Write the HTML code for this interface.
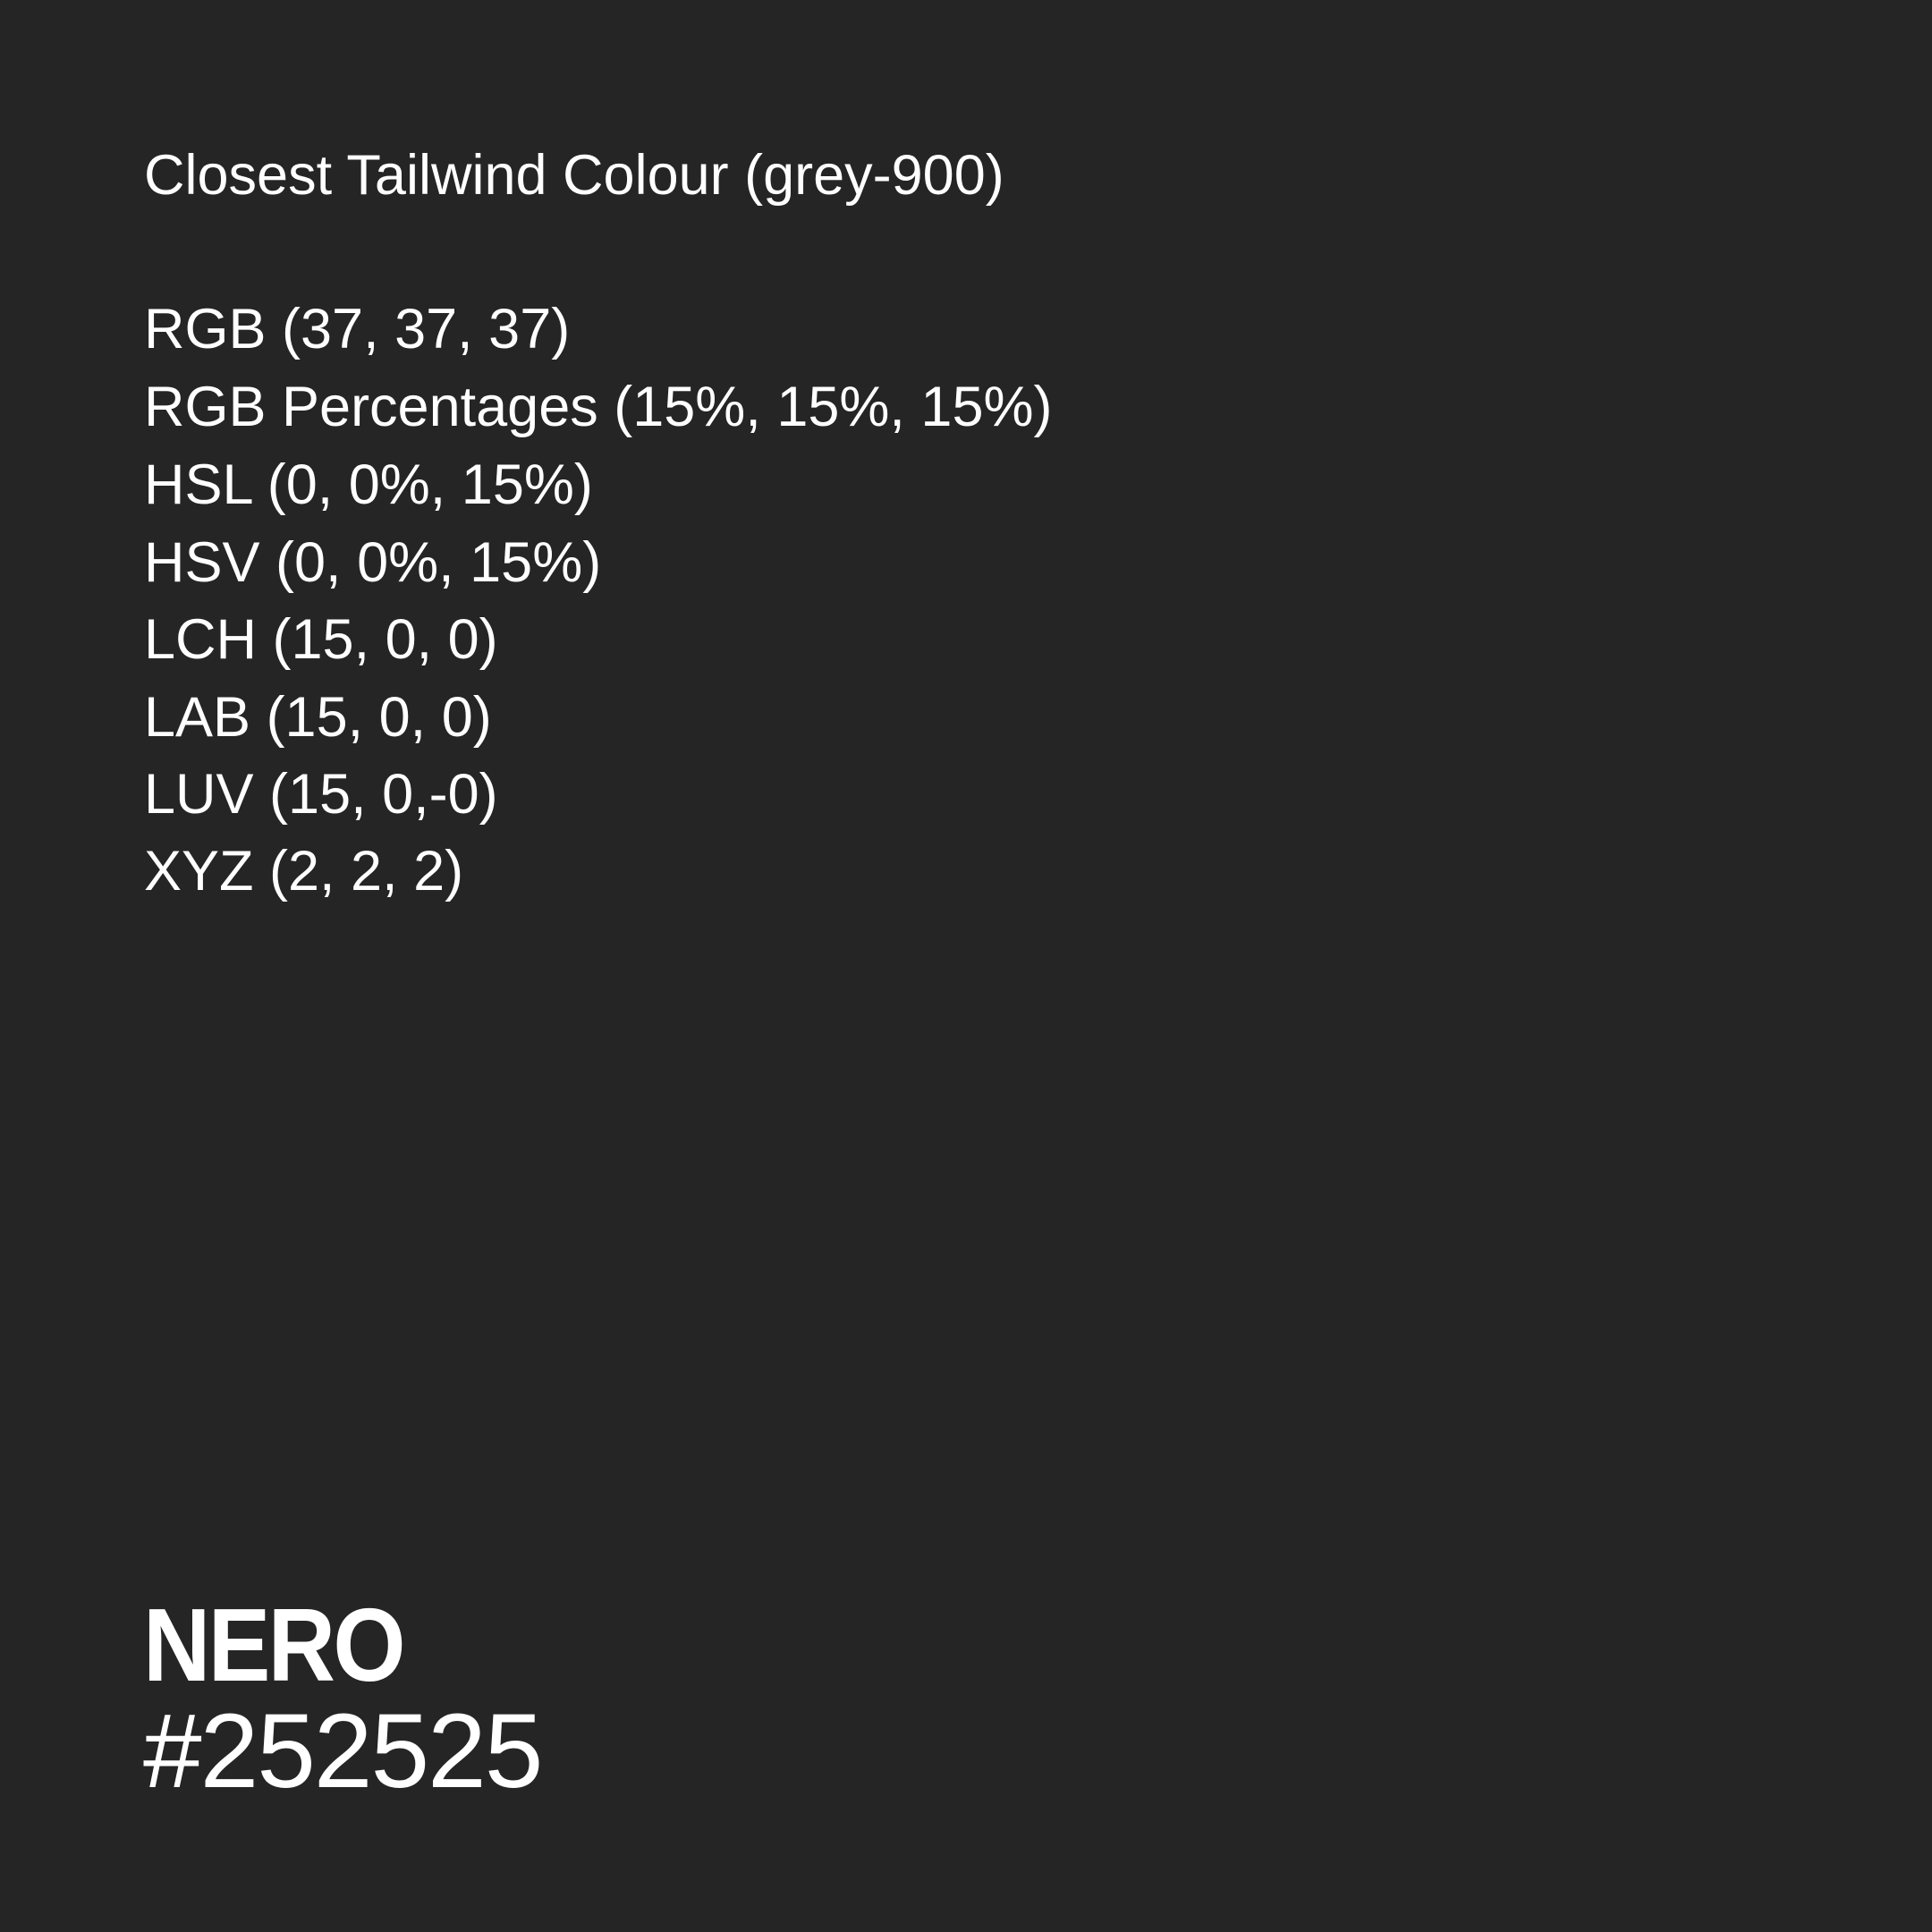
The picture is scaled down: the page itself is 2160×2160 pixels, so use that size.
<!DOCTYPE html>
<html><head><meta charset="utf-8"><style>
html,body{margin:0;padding:0;background:#252525;}
body{width:2160px;height:2160px;position:relative;overflow:hidden;font-family:"Liberation Sans",sans-serif;color:#fff;}
.t{position:absolute;left:161px;white-space:nowrap;font-size:63px;line-height:80px;letter-spacing:0px;}
.n{position:absolute;left:160px;white-space:nowrap;font-weight:bold;font-size:116px;line-height:130px;letter-spacing:-3px;transform:scaleX(0.9);transform-origin:left center;}
.h{position:absolute;left:160px;white-space:nowrap;font-size:118px;line-height:130px;letter-spacing:-2px;}
</style></head><body>
<div class="t" style="top:156px">Closest Tailwind Colour (grey-900)</div>
<div class="t" style="top:328px">RGB (37, 37, 37)</div>
<div class="t" style="top:415px">RGB Percentages (15%, 15%, 15%)</div>
<div class="t" style="top:502px">HSL (0, 0%, 15%)</div>
<div class="t" style="top:589px">HSV (0, 0%, 15%)</div>
<div class="t" style="top:675px">LCH (15, 0, 0)</div>
<div class="t" style="top:762px">LAB (15, 0, 0)</div>
<div class="t" style="top:848px">LUV (15, 0,-0)</div>
<div class="t" style="top:934px">XYZ (2, 2, 2)</div>
<div class="n" style="top:1774px">NERO</div>
<div class="h" style="top:1893px">#252525</div>
</body></html>
